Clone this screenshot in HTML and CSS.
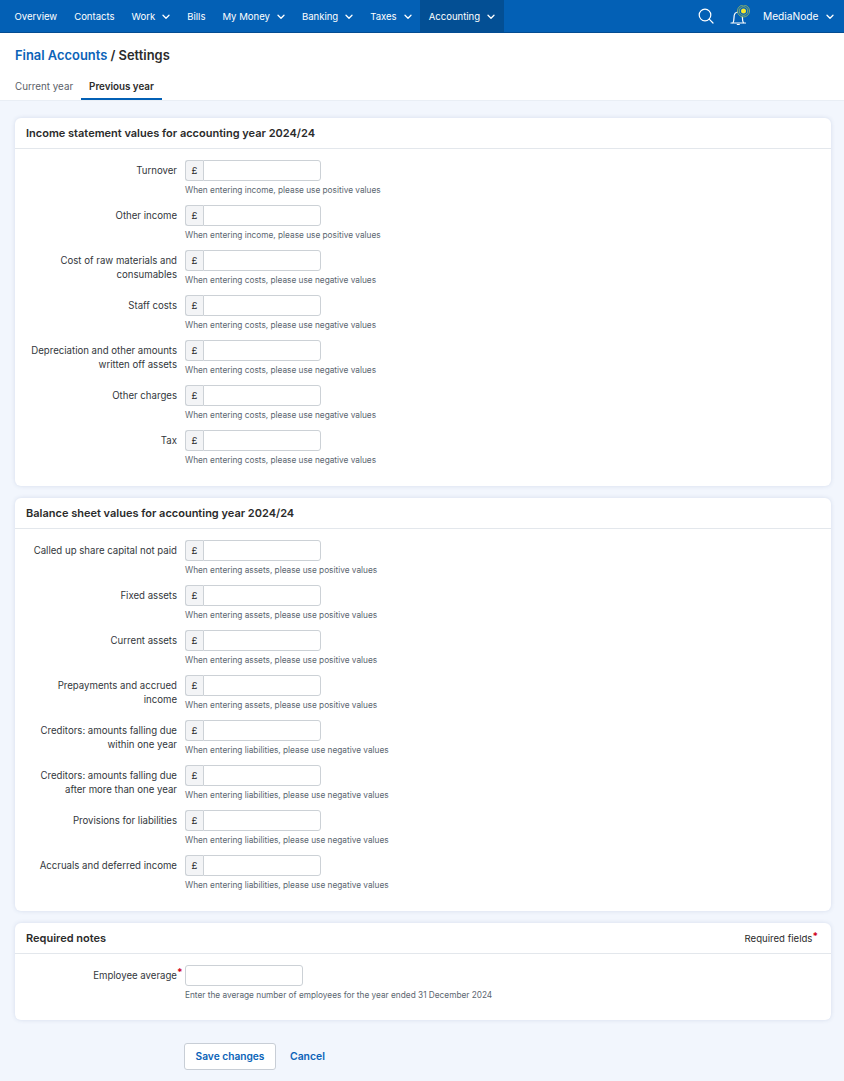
FILE: index.html
```html
<!DOCTYPE html>
<html lang="en">
<head>
<meta charset="utf-8">
<title>Final Accounts / Settings</title>
<link rel="stylesheet" href="styles.css">
</head>
<body>
<svg class="defs" width="0" height="0" aria-hidden="true"><defs>
<symbol id="chev" viewBox="0 0 8 6"><path d="M1 1.200 4 4.200 7 1.200" fill="none" stroke="currentColor" stroke-width="1.300" stroke-linecap="round" stroke-linejoin="round"/></symbol>
</defs></svg>
<nav class="topnav">
  <a class="navitem">Overview</a>
  <a class="navitem">Contacts</a>
  <a class="navitem">Work <svg class="chev"><use href="#chev"/></svg></a>
  <a class="navitem">Bills</a>
  <a class="navitem">My Money <svg class="chev"><use href="#chev"/></svg></a>
  <a class="navitem">Banking <svg class="chev"><use href="#chev"/></svg></a>
  <a class="navitem">Taxes <svg class="chev"><use href="#chev"/></svg></a>
  <a class="navitem active">Accounting <svg class="chev"><use href="#chev"/></svg></a>
  <div class="navright">
    <svg class="search" viewBox="0 0 16 16"><circle cx="7" cy="7" r="5.800" fill="none" stroke="#fff" stroke-width="1.200"/><path d="M11.200 11.200 15 15" stroke="#fff" stroke-width="1.200" stroke-linecap="round"/></svg>
    <svg class="bell" viewBox="0 0 22 22"><path d="M1 18h14.500M2.800 18c1-1.500 1.200-3 1.200-5.500 0-3.300 1.800-5.500 4.200-5.500s4.200 2.200 4.200 5.500c0 2.500.2 4 1.200 5.500M7.300 19.500h2" fill="none" stroke="#fff" stroke-width="1.200" stroke-linecap="round"/><circle cx="13.500" cy="6" r="6" fill="#0360b5" stroke="#b9cf55" stroke-width=".7"/><circle cx="13.500" cy="6" r="4.300" fill="none" stroke="#b9cf55" stroke-width=".7"/><circle cx="13.500" cy="6" r="2.500" fill="#f7e82c"/></svg>
    <a class="navitem user">MediaNode <svg class="chev"><use href="#chev"/></svg></a>
  </div>
</nav>
<header class="pagehead">
  <h1 class="title"><a class="titlelink">Final Accounts</a> / Settings</h1>
  <div class="tabs">
    <a class="tab">Current year</a>
    <a class="tab current">Previous year</a>
  </div>
</header>
<main class="content">
  <section class="card">
    <div class="cardhead"><h2>Income statement values for accounting year 2024/24</h2></div>
    <div class="cardbody">
      <div class="row"><label>Turnover</label><div class="field"><div class="money"><span class="cur">£</span><input></div><p class="hint">When entering income, please use positive values</p></div></div>
      <div class="row"><label>Other income</label><div class="field"><div class="money"><span class="cur">£</span><input></div><p class="hint">When entering income, please use positive values</p></div></div>
      <div class="row"><label>Cost of raw materials and consumables</label><div class="field"><div class="money"><span class="cur">£</span><input></div><p class="hint">When entering costs, please use negative values</p></div></div>
      <div class="row"><label>Staff costs</label><div class="field"><div class="money"><span class="cur">£</span><input></div><p class="hint">When entering costs, please use negative values</p></div></div>
      <div class="row"><label>Depreciation and other amounts written off assets</label><div class="field"><div class="money"><span class="cur">£</span><input></div><p class="hint">When entering costs, please use negative values</p></div></div>
      <div class="row"><label>Other charges</label><div class="field"><div class="money"><span class="cur">£</span><input></div><p class="hint">When entering costs, please use negative values</p></div></div>
      <div class="row"><label>Tax</label><div class="field"><div class="money"><span class="cur">£</span><input></div><p class="hint">When entering costs, please use negative values</p></div></div>
    </div>
  </section>
  <section class="card">
    <div class="cardhead"><h2>Balance sheet values for accounting year 2024/24</h2></div>
    <div class="cardbody">
      <div class="row"><label>Called up share capital not paid</label><div class="field"><div class="money"><span class="cur">£</span><input></div><p class="hint">When entering assets, please use positive values</p></div></div>
      <div class="row"><label>Fixed assets</label><div class="field"><div class="money"><span class="cur">£</span><input></div><p class="hint">When entering assets, please use positive values</p></div></div>
      <div class="row"><label>Current assets</label><div class="field"><div class="money"><span class="cur">£</span><input></div><p class="hint">When entering assets, please use positive values</p></div></div>
      <div class="row"><label>Prepayments and accrued income</label><div class="field"><div class="money"><span class="cur">£</span><input></div><p class="hint">When entering assets, please use positive values</p></div></div>
      <div class="row"><label>Creditors: amounts falling due within one year</label><div class="field"><div class="money"><span class="cur">£</span><input></div><p class="hint">When entering liabilities, please use negative values</p></div></div>
      <div class="row"><label>Creditors: amounts falling due after more than one year</label><div class="field"><div class="money"><span class="cur">£</span><input></div><p class="hint">When entering liabilities, please use negative values</p></div></div>
      <div class="row"><label>Provisions for liabilities</label><div class="field"><div class="money"><span class="cur">£</span><input></div><p class="hint">When entering liabilities, please use negative values</p></div></div>
      <div class="row"><label>Accruals and deferred income</label><div class="field"><div class="money"><span class="cur">£</span><input></div><p class="hint">When entering liabilities, please use negative values</p></div></div>
    </div>
  </section>
  <section class="card">
    <div class="cardhead split"><h2>Required notes</h2><span class="reqnote">Required fields<sup class="star">*</sup></span></div>
    <div class="cardbody notes">
      <div class="row"><label>Employee average<sup class="star over">*</sup></label><div class="field"><input class="plain"><p class="hint">Enter the average number of employees for the year ended 31 December 2024</p></div></div>
    </div>
  </section>
  <div class="actions">
    <button class="save">Save changes</button>
    <a class="cancel">Cancel</a>
  </div>
</main>
</body>
</html>
```
FILE: styles.css
```css
* { box-sizing: border-box; }
html, body { margin: 0; padding: 0; }
body {
  font-family: Inter, Lato, sans-serif;
  color: #2b2b2b;
  background: #f2f6fd;
  font-size: 9.6px;
}
.defs { position: absolute; }
.topnav {
  height: 33px;
  background: #0360b5;
  border-bottom: 1px solid #034c92;
  display: flex;
  align-items: stretch;
  padding-left: 6px;
  color: #fff;
  font-size: 9.55px;
}
.navitem {
  display: flex;
  align-items: center;
  padding: 0 8.500px;
  gap: 7px;
  white-space: nowrap;
}
.chev { width: 8px; height: 6px; color: #fff; margin-top: 1px; }
.navitem.active { background: #034f94; }
.navitem.user { font-size: 10.200px; padding-left: 9px; }
.navright { margin-left: auto; display: flex; align-items: center; padding-right: 2px; }
.search { width: 16px; height: 16px; margin-right: 16px; }
.bell { width: 22px; height: 22px; margin-right: 2px; }
.pagehead {
  background: #fff;
  height: 68px;
  padding: 0 0 0 15px;
  border-bottom: 1px solid #e9eef5;
  display: flex;
  flex-direction: column;
}
.title { margin: 14px 0 0; font-size: 12.900px; line-height: 17px; font-weight: 600; color: #2b2b2b; }
.titlelink { color: #0b63b8; }
.tabs { display: flex; margin-top: 14px; }
.tab { font-size: 9.800px; line-height: 15px; height: 22px; padding-top: 1px; color: #5a6068; }
.tab.current {
  margin-left: 8px;
  padding: 1px 8px 0;
  font-weight: 600;
  color: #2b2b2b;
  border-bottom: 2px solid #0360b5;
}
.content { padding: 17px 13px 0 15px; }
.card {
  background: #fff;
  border-radius: 6px;
  box-shadow: 0 0 4px rgba(60, 90, 140, .16);
  margin-bottom: 12px;
}
.cardhead {
  height: 31px;
  padding: 0 11px;
  display: flex;
  align-items: center;
  border-bottom: 1px solid #e3e7ec;
}
.cardhead.split { justify-content: space-between; padding-right: 13px; }
.cardhead h2 { margin: 0; font-size: 11px; font-weight: 600; color: #2b2b2b; }
.reqnote { font-size: 9.600px; color: #2b2b2b; }
.star { color: #d0021b; font-size: 10px; line-height: 0; vertical-align: 2px; font-weight: 700; }
.star.over { position: absolute; margin-top: 3px; }
.cardbody { padding: 11px 0; }
.cardbody.notes { padding-bottom: 19px; }
.row { display: flex; height: 45px; }
.notes .row { height: auto; }
.row label {
  width: 162px;
  flex: none;
  text-align: right;
  font-size: 9.650px;
  line-height: 14px;
  padding: 4px 0 0 14px;
  color: #33373c;
}
.field { margin-left: 8px; }
.money { display: flex; width: 136px; height: 21px; }
.cur {
  width: 18px;
  flex: none;
  background: #f3f4f6;
  border: 1px solid #ccd1d6;
  border-right: none;
  border-radius: 3px 0 0 3px;
  text-align: center;
  line-height: 19px;
}
.money input, .plain {
  border: 1px solid #ccd1d6;
  background: #fff;
  padding: 0;
  margin: 0;
  display: block;
  height: 21px;
}
.money input { flex: 1; min-width: 0; border-radius: 0 3px 3px 0; }
.plain { width: 118px; border-radius: 3px; }
.hint { margin: 2.500px 0 0; font-size: 8.270px; line-height: 12px; color: #5b6670; white-space: nowrap; }
.actions { display: flex; align-items: center; padding: 11px 0 0 169px; }
.save {
  width: 92px;
  height: 27px;
  background: #fff;
  border: 1px solid #c8ced6;
  border-radius: 3px;
  color: #0b63b8;
  font: 600 10.200px Inter, Lato, sans-serif;
  padding: 0;
}
.cancel { margin-left: 14px; color: #0b63b8; font-weight: 600; font-size: 10.400px; }
```
